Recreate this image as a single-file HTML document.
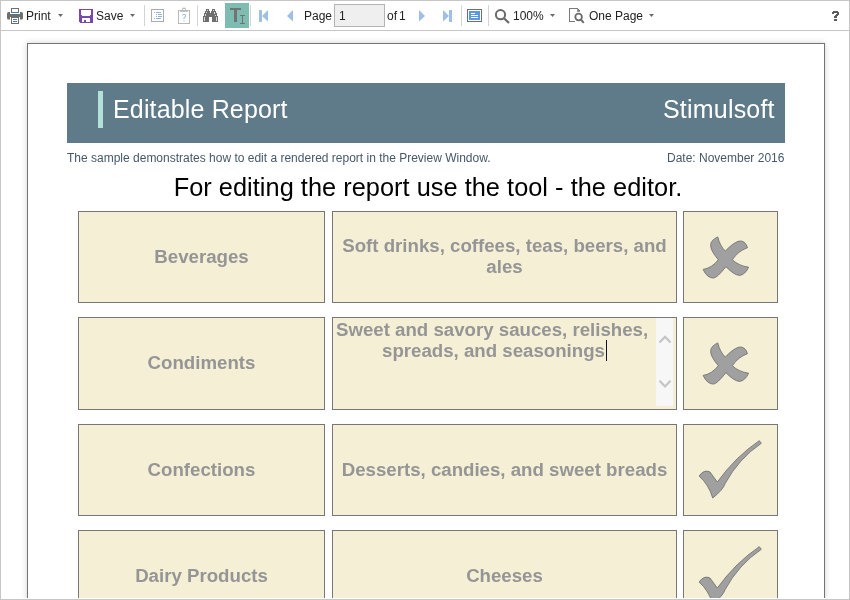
<!DOCTYPE html>
<html><head><meta charset="utf-8">
<style>
*{box-sizing:border-box;margin:0;padding:0}
html,body{width:850px;height:600px;overflow:hidden;background:#fff;font-family:"Liberation Sans",sans-serif;-webkit-font-smoothing:antialiased}
#wrap{position:absolute;left:0;top:0;width:850px;height:600px;overflow:hidden}
#frame{position:absolute;left:0;top:0;width:850px;height:600px;border:1px solid #c6c6c6;z-index:10}
#tb{position:absolute;left:0;top:0;width:850px;height:31px;border-bottom:1px solid #c6c6c6;background:#fff;font-size:12px;color:#222}
.a{position:absolute}
.t{position:absolute;white-space:nowrap;line-height:1;will-change:transform}
#page{position:absolute;left:27px;top:43px;width:798px;height:600px;border:1px solid #747474;background:#fff;box-shadow:0 0 6px rgba(0,0,0,0.18)}
.cell{position:absolute;background:#f5efd6;border:1px solid #777;}
.ct{position:absolute;margin-top:-0.5px;white-space:nowrap;text-align:center;font-weight:bold;font-size:18.67px;color:#959595;line-height:21px;will-change:transform}
.sep{position:absolute;top:9px;width:1px;height:17px;background:#ddd}
</style></head><body>
<div id="wrap">
<div id="tb">
<svg class="a" style="left:0;top:0" width="850" height="31" viewBox="0 0 850 31" shape-rendering="crispEdges">
  <!-- printer -->
  <path d="M7 13.5Q7 12 8.5 12H21.5Q23 12 23 13.5V18Q23 19.5 21.5 19.5H8.5Q7 19.5 7 18Z" fill="#6e6e6e" shape-rendering="auto"/>
  <rect x="10" y="8" width="10" height="6" fill="#fff"/>
  <rect x="11.5" y="8.5" width="7" height="4" fill="#fff" stroke="#6e6e6e"/>
  <rect x="11" y="12" width="8" height="1" fill="#3f7cc4"/>
  <rect x="10" y="17" width="10" height="7" fill="#fff"/>
  <rect x="11.5" y="17.5" width="7" height="6" fill="#fff" stroke="#6e6e6e"/>
  <rect x="13" y="19" width="4" height="1" fill="#3f7cc4"/>
  <rect x="13" y="21" width="4" height="1" fill="#3f7cc4"/>
  <path d="M58 14H63L60.5 17Z" fill="#6a6a6a" shape-rendering="auto"/>
  <!-- save -->
  <path d="M79 9H93V23H80L79 22Z" fill="#7b46ad"/>
  <path d="M81 10H91V15L90.3 15.6H81.7L81 15Z" fill="#fff"/>
  <rect x="82" y="18" width="8" height="4" fill="#fff"/>
  <rect x="84" y="20" width="2" height="2" fill="#7b46ad"/>
  <path d="M130 14H135L132.5 17Z" fill="#6a6a6a" shape-rendering="auto"/>
  <rect x="144" y="5" width="1" height="21" fill="#d4d4d4"/>
  <!-- list icon -->
  <rect x="151.5" y="9.5" width="12" height="12" fill="#fff" stroke="#ababab"/>
  <g fill="#8db0dc">
    <rect x="154" y="12" width="1" height="1"/><rect x="156" y="12" width="5" height="1"/>
    <rect x="156" y="14" width="1" height="1"/><rect x="158" y="14" width="4" height="1"/>
    <rect x="156" y="16" width="1" height="1"/><rect x="158" y="16" width="4" height="1"/>
    <rect x="154" y="18" width="1" height="1"/><rect x="156" y="18" width="5" height="1"/>
  </g>
  <!-- clipboard -->
  <rect x="178.5" y="10.5" width="11" height="13" fill="#fff" stroke="#b8b8b8"/>
  <rect x="180" y="11" width="8" height="1" fill="#c4c4c4"/>
  <path d="M182 11V9.6Q182 7.6 184 7.6Q186 7.6 186 9.6V11Z" fill="#b8b8b8" shape-rendering="auto"/>
  <rect x="183" y="9" width="2" height="1" fill="#fff"/>
  <path d="M182.6 15.6Q182.6 14.2 184.2 14.2Q185.7 14.2 185.7 15.7Q185.7 16.6 184.7 17.3Q183.9 17.9 183.9 19" fill="none" stroke="#9fbfe6" stroke-width="1.1" shape-rendering="auto"/><rect x="183.4" y="20.3" width="1.2" height="1" fill="#9fbfe6" shape-rendering="auto"/>
  <rect x="197" y="5" width="1" height="21" fill="#d4d4d4"/>
  <!-- binoculars -->
  <path d="M206 9H209V11H210V13H211V11H212V9H215V11H216V13H217V16H218V22H212V16.5H209V22H203V16H204V13H205V11H206Z" fill="#6e6e6e"/>
  <g fill="#d8d8d8">
    <rect x="207" y="10" width="1" height="1"/><rect x="206" y="12" width="1" height="1"/>
    <rect x="205" y="14" width="1" height="2"/><rect x="204" y="17" width="1" height="4"/>
    <rect x="213" y="10" width="1" height="1"/><rect x="214" y="12" width="1" height="2"/>
    <rect x="215" y="15" width="1" height="1"/><rect x="216" y="17" width="1" height="4"/>
  </g>
  <!-- active T -->
  <rect x="225" y="3" width="24" height="25" fill="#7dbcb0"/>
  <rect x="230" y="8" width="11" height="2" fill="#737373"/>
  <rect x="234" y="8" width="3" height="14" fill="#737373"/>
  <rect x="240" y="15" width="5" height="1" fill="#737373"/>
  <rect x="242" y="15" width="1" height="9" fill="#737373"/>
  <rect x="240" y="23" width="5" height="1" fill="#737373"/>
  <rect x="250" y="5" width="1" height="21" fill="#d4d4d4"/>
  <!-- nav -->
  <g fill="#9fc0e2" shape-rendering="auto">
    <rect x="259" y="10" width="3" height="12"/>
    <path d="M268 10V21.5L262 16Z"/>
    <path d="M293 10V21.5L287 16Z"/>
    <path d="M419 10V21.5L425 16Z"/>
    <path d="M443 10V21.5L449 16Z"/>
    <rect x="449" y="10" width="3" height="12"/>
  </g>
  <rect x="334.5" y="4.5" width="50" height="22" fill="#efefef" stroke="#b4b4b4"/>
  <rect x="461" y="5" width="1" height="21" fill="#d4d4d4"/>
  <!-- view icon -->
  <rect x="467.5" y="9.5" width="14" height="12" fill="#fff" stroke="#6e6e6e"/>
  <rect x="469" y="11" width="11" height="9" fill="#5b9ae0"/>
  <rect x="471" y="13" width="4" height="1" fill="#fff"/>
  <rect x="471" y="15" width="7" height="1" fill="#fff"/>
  <rect x="471" y="17" width="7" height="1" fill="#fff"/>
  <rect x="488" y="5" width="1" height="21" fill="#d4d4d4"/>
  <!-- zoom -->
  <g shape-rendering="auto">
  <circle cx="500.5" cy="14.7" r="4.6" fill="none" stroke="#6a6a6a" stroke-width="2"/>
  <path d="M504 18.2L509 23" stroke="#6a6a6a" stroke-width="2.2"/>
  <path d="M550 14H555L552.5 17Z" fill="#6a6a6a"/>
  </g>
  <!-- one page icon -->
  <path d="M574.5 21.5H569.5V8.5H577L579.5 11V12" fill="none" stroke="#7a7a7a"/>
  <path d="M577 8.5V11H580" fill="none" stroke="#9a9a9a"/>
  <g shape-rendering="auto">
  <circle cx="578.6" cy="17" r="3.3" fill="none" stroke="#6a6a6a" stroke-width="1.8"/>
  <path d="M580.8 19.5L583.8 22.8" stroke="#6a6a6a" stroke-width="2"/>
  <path d="M649 14H654L651.5 17Z" fill="#6a6a6a"/>
  </g>
  <!-- help -->
  <path d="M833 11H838V12H839V15H838V16H837V18H834V16H835V15H836V14H837V13H834V14H832V12H833Z" fill="#5c5c5c"/>
  <rect x="834" y="19" width="3" height="2" fill="#5c5c5c"/>
</svg>
  <div class="t" style="left:26px;top:10px">Print</div>
  <div class="t" style="left:96px;top:10px">Save</div>
  <div class="t" style="left:304px;top:10px">Page</div>
  <div class="t" style="left:339px;top:10px">1</div>
  <div class="t" style="left:387px;top:10px">of</div>
  <div class="t" style="left:399px;top:10px">1</div>
  <div class="t" style="left:513px;top:10px">100%</div>
  <div class="t" style="left:589px;top:10px">One Page</div>
</div>

<div id="page">
  <div class="a" style="left:39px;top:39px;width:718px;height:60px;background:#5f7b89"></div>
  <div class="a" style="left:70px;top:47px;width:5px;height:37px;background:#b3e0d8"></div>
  <div class="t" style="left:85px;top:53px;font-size:25px;color:#fff;letter-spacing:0.15px">Editable Report</div>
  <div class="t" style="right:49.5px;top:53px;font-size:25px;color:#fff;letter-spacing:0.2px">Stimulsoft</div>
  <div class="t" style="left:39px;top:108px;font-size:12px;color:#46586a">The sample demonstrates how to edit a rendered report in the Preview Window.</div>
  <div class="t" style="right:40px;top:108px;font-size:12px;color:#46586a">Date: November 2016</div>
  <div class="t" style="left:1px;width:798px;text-align:center;top:131px;font-size:25.33px;color:#000;letter-spacing:0.035px">For editing the report use the tool - the editor.</div>
</div>

<!-- rows -->
<div id="rows">
  <div class="cell" style="left:78px;top:211px;width:247px;height:92px"></div>
  <div class="cell" style="left:332px;top:211px;width:345px;height:92px"></div>
  <div class="cell" style="left:683px;top:211px;width:95px;height:92px"></div>
  <div class="cell" style="left:78px;top:317px;width:247px;height:93px"></div>
  <div class="cell" style="left:332px;top:317px;width:345px;height:93px"></div>
  <div class="cell" style="left:683px;top:317px;width:95px;height:93px"></div>
  <div class="cell" style="left:78px;top:424px;width:247px;height:92px"></div>
  <div class="cell" style="left:332px;top:424px;width:345px;height:92px"></div>
  <div class="cell" style="left:683px;top:424px;width:95px;height:92px"></div>
  <div class="cell" style="left:78px;top:530px;width:247px;height:92px"></div>
  <div class="cell" style="left:332px;top:530px;width:345px;height:92px"></div>
  <div class="cell" style="left:683px;top:530px;width:95px;height:92px"></div>

  <div class="a" style="left:656px;top:318px;width:17px;height:88px;background:#f7f7f7"></div>

  <div class="ct" style="left:78px;width:247px;top:246px">Beverages</div>
  <div class="ct" style="left:332px;width:345px;top:235px">Soft drinks, coffees, teas, beers, and</div>
  <div class="ct" style="left:332px;width:345px;top:256px">ales</div>
  <div class="ct" style="left:78px;width:247px;top:352px">Condiments</div>
  <div class="ct" style="left:336px;top:319px">Sweet and savory sauces, relishes,</div>
  <div class="ct" style="left:382px;top:340px">spreads, and seasonings</div>
  <div class="a" style="left:606px;top:340px;width:1px;height:21px;background:#111428"></div>
  <div class="ct" style="left:78px;width:247px;top:459px">Confections</div>
  <div class="ct" style="left:332px;width:345px;top:459px">Desserts, candies, and sweet breads</div>
  <div class="ct" style="left:78px;width:247px;top:565px">Dairy Products</div>
  <div class="ct" style="left:332px;width:345px;top:565px">Cheeses</div>

  <svg class="a" style="left:0;top:0" width="850" height="600" viewBox="0 0 850 600">
    <g fill="none" stroke="#c4c4c4" stroke-width="2.2">
      <path d="M659.5 342.5L665 336.8L670.5 342.5"/>
      <path d="M659.5 380.8L665 386.5L670.5 380.8"/>
    </g>
    <defs>
      <path id="xx" d="M717.75 236.9Q720 246 725.3 251Q733 243 738.3 241.3Q745 239.5 747.5 247.7Q738 251 732.4 259.7Q738 265.5 748.6 267.2Q745 275 739.4 275.4Q734 275 725.9 266.7Q717 278 713.4 278.1Q707 278 703.1 269.4Q712 268 718.3 259.7Q710 250 710.7 244.5Q711 240 717.75 236.9Z"/>
      <path id="ck" d="M699.1 476Q704 469 710 472L717.3 482Q735.7 456.6 759.3 440.7L761.3 443.3Q738.7 458.7 725.3 483.3Q723 490 712.7 498Q709 485 699.1 476Z"/>
    </defs>
    <g fill="#a0a0a0" stroke="#6a6a6a" stroke-width="0.8">
      <use href="#xx"/>
      <use href="#xx" y="106"/>
      <use href="#ck"/>
      <use href="#ck" y="106"/>
    </g>
  </svg>
</div>
</div>
<div class="a" style="left:0;top:598px;width:850px;height:1px;background:#fff;z-index:9"></div>
<div id="frame"></div>
</body></html>
